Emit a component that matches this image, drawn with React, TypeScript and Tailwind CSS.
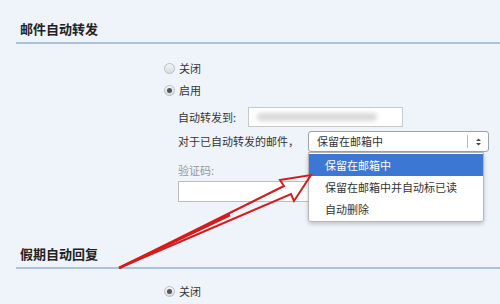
import React from "react";

const Radio = ({ checked }: { checked?: boolean }) => (
  <span className="relative inline-flex h-[11px] w-[11px] items-center justify-center rounded-full border border-[#b8bec6] bg-gradient-to-b from-[#f4f4f4] to-[#dcdcdc]">
    {checked && <span className="h-[5px] w-[5px] rounded-full bg-[#555]" />}
  </span>
);

export default function App() {
  const font = { fontFamily: '"Noto Sans CJK SC", "Noto Sans", sans-serif' };
  return (
    <div
      className="relative h-[304px] w-[500px] overflow-hidden bg-[#eff3fa] text-[#333]"
      style={font}
    >
      {/* Section 1 */}
      <div className="pt-[19px]">
        <div className="ml-[16px] border-b-2 border-[#a9c3db] pb-[3px] pl-[4px] text-[13px] font-bold leading-[20px] text-[#222]">
          邮件自动转发
        </div>
      </div>
      <div className="flex flex-col pl-[164px] pt-[13px] text-[11px]">
        <div className="flex h-[22px] items-center gap-[4px]">
          <Radio />
          <span>关闭</span>
        </div>
        <div className="flex h-[22px] items-center gap-[4px]">
          <Radio checked />
          <span>启用</span>
        </div>
        <div className="flex flex-col pl-[14px] pt-[6px]">
          <div className="flex h-[20px] items-center">
            <span className="w-[70px]">自动转发到:</span>
            <div className="flex h-[20px] w-[155px] items-center border border-[#c9c9c9] bg-white px-[8px]">
              <div className="h-[8px] w-[120px] rounded-sm bg-[#d9d9d9] blur-[2px]" />
            </div>
          </div>
          <div className="mt-[4px] flex h-[21px] items-center">
            <span className="w-[130px]">对于已自动转发的邮件，</span>
            <div className="flex h-[21px] w-[181px] items-center rounded-[3px] border border-[#9aa3ad] bg-white pl-[8px] pr-[6px]">
              <span className="flex-1">保留在邮箱中</span>
              <span className="mr-[7px] h-[13px] w-px bg-[#bbb]" />
              <svg width="7" height="10" viewBox="0 0 7 10">
                <path d="M1 4 L3.5 1.5 L6 4 Z M1 6 L3.5 8.5 L6 6 Z" fill="#444" />
              </svg>
            </div>
          </div>
          <div className="mt-[10px] leading-[16px] text-[#999]">验证码:</div>
          <div className="mt-[3px] h-[21px] w-[190px] border border-[#bdbdbd] bg-white" />
        </div>
      </div>

      {/* Section 2 */}
      <div className="pt-[42px]">
        <div className="ml-[16px] border-b-2 border-[#a9c3db] pb-[3px] pl-[4px] text-[13px] font-bold leading-[20px] text-[#222]">
          假期自动回复
        </div>
      </div>
      <div className="flex flex-col pl-[164px] pt-[11px] text-[11px]">
        <div className="flex h-[22px] items-center gap-[4px]">
          <Radio checked />
          <span>关闭</span>
        </div>
      </div>

      {/* Dropdown menu overlay */}
      <div className="absolute left-[308px] top-[152px] w-[176px] rounded-b-[3px] border border-[#b5b5b5] bg-white py-px text-[11px] shadow-[0_2px_4px_rgba(0,0,0,0.2)]">
        <div className="flex h-[22px] items-center bg-[#3c78d3] pl-[16px] text-white">保留在邮箱中</div>
        <div className="flex h-[22px] items-center pl-[16px]">保留在邮箱中并自动标已读</div>
        <div className="flex h-[22px] items-center pl-[16px]">自动删除</div>
      </div>

      {/* Red arrow annotation */}
      <svg className="pointer-events-none absolute left-0 top-0" width="500" height="304">
        <polygon
          points="119,268 284,186 280,180 311,175 294,201 291,194"
          fill="none"
          stroke="#d41c1c"
          strokeWidth="2"
          strokeLinejoin="miter"
        />
        <line x1="119" y1="268" x2="230" y2="215" stroke="#d41c1c" strokeWidth="2.5" />
      </svg>
    </div>
  );
}
